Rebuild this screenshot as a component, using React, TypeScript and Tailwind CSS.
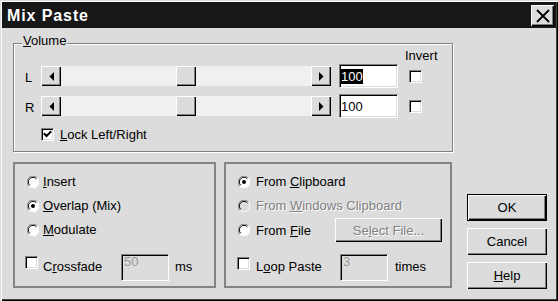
import React from 'react';

const raised =
  'bg-[#dcdcdc] shadow-[inset_1px_1px_0_#fff,inset_-1px_-1px_0_#000,inset_-2px_-2px_0_#808080]';
const sunken =
  'border border-t-[#808080] border-l-[#808080] border-r-white border-b-white shadow-[inset_1px_1px_0_#000,inset_-1px_-1px_0_#dcdcdc]';
const dim = 'text-[#808080] [text-shadow:1px_1px_0_#fff]';

function Radio({ on, disabled }: { on?: boolean; disabled?: boolean }) {
  return (
    <svg width="12" height="12" viewBox="0 0 12 12" className="shrink-0">
      <circle cx="6" cy="6" r="5.5" fill={disabled ? '#dcdcdc' : '#fff'} />
      <path d="M10.2 1.8 A5.5 5.5 0 0 0 1.8 10.2" stroke="#808080" strokeWidth="1" fill="none" />
      <path d="M9.3 2.7 A4.6 4.6 0 0 0 2.7 9.3" stroke="#000" strokeWidth="1" fill="none" />
      <path d="M1.8 10.2 A5.5 5.5 0 0 0 10.2 1.8" stroke="#fff" strokeWidth="1" fill="none" />
      {on && <circle cx="6" cy="6" r="2" fill="#000" />}
    </svg>
  );
}

function Check({ on, className = '' }: { on?: boolean; className?: string }) {
  return (
    <span className={`flex h-[13px] w-[13px] shrink-0 items-center justify-center bg-white ${sunken} ${className}`}>
      {on && (
        <svg width="9" height="9" viewBox="0 0 9 9">
          <path d="M1.5 4 L3.5 6 L7.5 2" stroke="#000" strokeWidth="2" fill="none" strokeLinecap="square" />
        </svg>
      )}
    </span>
  );
}

function Arrow({ dir }: { dir: 'left' | 'right' }) {
  return (
    <span className={`flex h-[20px] w-[20px] shrink-0 items-center justify-center ${raised}`}>
      <svg width="5" height="9" viewBox="0 0 5 9">
        {dir === 'left' ? <path d="M5 0 L0.5 4.5 L5 9 Z" fill="#000" /> : <path d="M0 0 L4.5 4.5 L0 9 Z" fill="#000" />}
      </svg>
    </span>
  );
}

function Scroll() {
  return (
    <div className="flex h-[20px] w-[290px] shrink-0 bg-[#f0f0f0]">
      <Arrow dir="left" />
      <div className="w-[115px]" />
      <span className={`h-[20px] w-[20px] ${raised}`} />
      <div className="flex-1" />
      <Arrow dir="right" />
    </div>
  );
}

function VolRow({ name, selected, className = '' }: { name: string; selected?: boolean; className?: string }) {
  return (
    <div className={`flex h-[24px] items-center ${className}`}>
      <span className="w-[27px] pl-[11px] pt-[2px]">{name}</span>
      <Scroll />
      <div className={`ml-[8px] flex h-[24px] w-[59px] items-center bg-white pl-[1px] ${sunken}`}>
        {selected ? <span className="bg-black text-white">100</span> : <span>100</span>}
      </div>
      <Check className="ml-[11px]" />
    </div>
  );
}

function Button({ children, def, className = '' }: { children: React.ReactNode; def?: boolean; className?: string }) {
  return (
    <div
      className={`flex h-[27px] w-[80px] items-center justify-center ${raised} ${def ? 'border border-black' : ''} ${className}`}
    >
      {children}
    </div>
  );
}

export default function App() {
  return (
    <div className="h-[301px] w-[558px] overflow-hidden bg-[#dcdcdc] p-[2px] font-['Liberation_Sans',Arial,sans-serif] text-[13px] leading-[15px] text-black shadow-[inset_1px_1px_0_#dcdcdc,inset_2px_2px_0_#fff,inset_-1px_-1px_0_#000,inset_-2px_-2px_0_#404040]">
      {/* title bar */}
      <div className="flex h-[26px] items-start justify-between bg-[#171717]">
        <span className="pl-[5px] pt-[5px] text-[16px] font-bold leading-[18px] tracking-[0.9px] text-white">Mix Paste</span>
        <span className={`mr-[2px] mt-[3px] flex h-[21px] w-[23px] items-center justify-center ${raised}`}>
          <svg width="14" height="14" viewBox="0 0 14 14">
            <path d="M1 1 L13 13 M13 1 L1 13" stroke="#000" strokeWidth="1.8" />
          </svg>
        </span>
      </div>

      <div className="flex flex-col pl-[11px]">
        {/* Volume group */}
        <div className="mt-[15px] flex h-[109px] w-[440px] flex-col border border-[#808080] shadow-[1px_1px_0_#fff,inset_1px_1px_0_#fff]">
          <div className="-mt-[11px] ml-[8px] w-fit bg-[#dcdcdc] px-[1px]">
            <u>V</u>olume
          </div>
          <div className="pl-[391px]">Invert</div>
          <VolRow name="L" selected className="mt-[1px]" />
          <VolRow name="R" className="mt-[6px]" />
          <div className="mt-[9px] flex h-[15px] items-center pl-[27px]">
            <Check on />
            <span className="ml-[6px]">
              <u>L</u>ock Left/Right
            </span>
          </div>
        </div>

        <div className="mt-[10px] flex items-start">
          {/* paste mode group */}
          <div className="flex h-[126px] w-[203px] flex-col border-2 border-[#848484] pt-[10px]">
            <div className="flex h-[15px] items-center gap-[4px] pl-[12px]">
              <Radio />
              <span>
                <u>I</u>nsert
              </span>
            </div>
            <div className="mt-[9px] flex h-[15px] items-center gap-[4px] pl-[12px]">
              <Radio on />
              <span>
                <u>O</u>verlap (Mix)
              </span>
            </div>
            <div className="mt-[9px] flex h-[15px] items-center gap-[4px] pl-[12px]">
              <Radio />
              <span>
                <u>M</u>odulate
              </span>
            </div>
            <div className="mt-[17px] flex h-[27px] items-start pl-[10px]">
              <Check className="mt-[2px]" />
              <span className="ml-[5px] mt-[5px] w-[78px]">
                C<u>r</u>ossfade
              </span>
              <div className={`h-[27px] w-[48px] pl-[2px] leading-[13px] text-[#9a9a9a] ${sunken}`}>50</div>
              <span className="ml-[6px] mt-[5px]">ms</span>
            </div>
          </div>

          {/* source group */}
          <div className="ml-[8px] flex h-[126px] w-[228px] flex-col border-2 border-[#848484] pt-[10px]">
            <div className="flex h-[15px] items-center gap-[6px] pl-[12px]">
              <Radio on />
              <span>
                From <u>C</u>lipboard
              </span>
            </div>
            <div className="mt-[9px] flex h-[15px] items-center gap-[6px] pl-[12px]">
              <Radio disabled />
              <span className={dim}>
                From <u>W</u>indows Clipboard
              </span>
            </div>
            <div className="mt-[5px] flex h-[24px] items-center gap-[6px] pl-[12px]">
              <Radio />
              <span className="w-[79px]">
                From <u>F</u>ile
              </span>
              <div className={`-ml-[6px] flex h-[24px] w-[107px] items-center justify-center ${raised}`}>
                <span className={dim}>
                  Se<u>l</u>ect File...
                </span>
              </div>
            </div>
            <div className="mt-[12px] flex h-[27px] items-start pl-[11px]">
              <Check className="mt-[3px]" />
              <span className="ml-[6px] mt-[5px] w-[84px]">
                L<u>o</u>op Paste
              </span>
              <div className={`h-[27px] w-[48px] pl-[2px] leading-[13px] text-[#9a9a9a] ${sunken}`}>3</div>
              <span className="ml-[7px] mt-[5px]">times</span>
            </div>
          </div>

          {/* buttons */}
          <div className="ml-[15px] mt-[32px] flex flex-col gap-[7px]">
            <Button def>OK</Button>
            <Button>Cancel</Button>
            <Button>
              <span>
                <u>H</u>elp
              </span>
            </Button>
          </div>
        </div>
      </div>
    </div>
  );
}
